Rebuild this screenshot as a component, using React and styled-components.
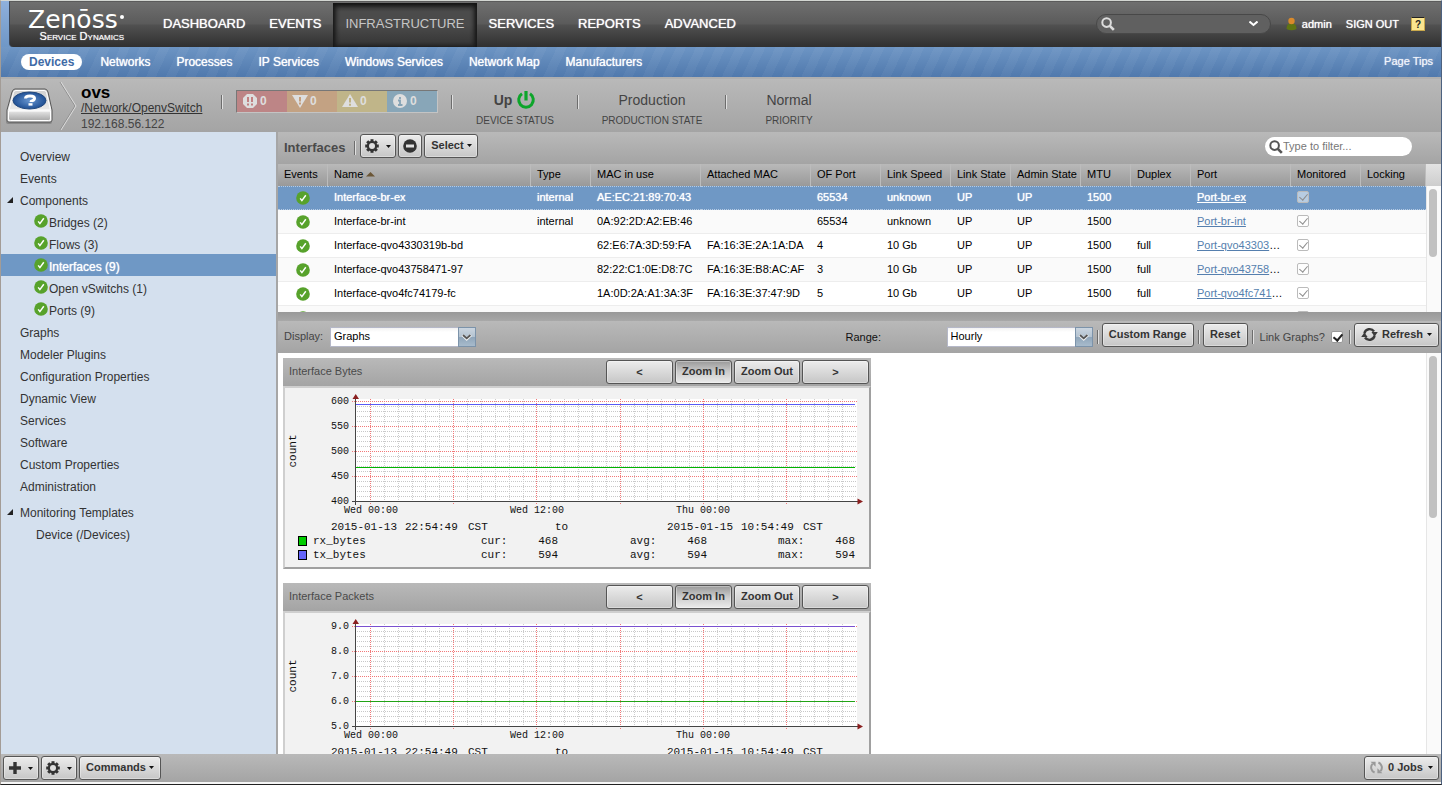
import React from "react";
import styled, { createGlobalStyle, css } from "styled-components";

const GlobalStyle = createGlobalStyle`
  * { box-sizing: border-box; }
  html, body, #root { height: 100%; }
  body {
    margin: 0;
    overflow: hidden;
    font-family: "Liberation Sans", Arial, Helvetica, sans-serif;
    font-size: 11px;
    color: #000;
  }
  button, input, select { font-family: inherit; font-size: 11px; margin: 0; }
  ul { list-style: none; margin: 0; padding: 0; }
`;

const greyBar = "linear-gradient(#b9b9b9, #a4a4a4)";

const Page = styled.div`
  display: flex;
  flex-direction: column;
  height: 100vh;
  border-top: 1px solid #d3d6d2;
  border-left: 1px solid #a39c96;
  border-right: 1px solid #4d6280;
  border-bottom: 1px solid #222;
  background: #a6a6a6;
`;

/* ---------- top navigation ---------- */

const TopFrame = styled.div`
  flex: none;
  padding-left: 8px;
  background: linear-gradient(#8fb0dc, #6f97c6);
`;

const TopBar = styled.header`
  display: flex;
  height: 46px;
  padding-left: 18px;
  border-top: 1px solid #5b5b5b;
  border-left: 1px solid #3c4656;
  border-bottom-left-radius: 4px;
  background: linear-gradient(#6f6f6f, #5b5b5b 48%, #505050 52%, #303030);
`;

const Logo = styled.a`
  display: flex;
  flex-direction: column;
  align-items: flex-end;
  width: 98px;
  margin-right: 25px;
  padding-top: 5px;
  color: #fff;
  text-decoration: none;
`;

const LogoName = styled.span`
  display: flex;
  width: 98px;
  font: 25px/25px "DejaVu Sans", sans-serif;
`;

const LogoDot = styled.span`
  width: 4px;
  height: 4px;
  margin: 8px 0 0 2px;
  border-radius: 50%;
  background: #fff;
`;

const LogoTag = styled.span`
  margin-right: 2px;
  font-size: 11px;
  line-height: 9px;
  font-variant: small-caps;
  white-space: nowrap;
  text-shadow: 0 0 1px #ccc;
`;

const MainNav = styled.nav`
  display: flex;
  flex: 1;
`;

const MainLink = styled.a`
  padding: 0 12px;
  margin-top: 1px;
  color: #fff;
  font-size: 13px;
  line-height: 42px;
  text-decoration: none;
  text-shadow: 0 0 1px #fff;
  ${(p) =>
    p.$active &&
    css`
      color: #c6c6c6;
      text-shadow: none;
      background: linear-gradient(#333, #4b4b4b 20%, #4b4b4b 50%, #333);
      box-shadow: inset 0 2px 5px #111, inset 3px 0 4px #222, inset -3px 0 4px #222;
    `}
`;

const UserArea = styled.div`
  display: flex;
  align-items: center;
  height: 44px;
  padding-right: 16px;
  a {
    color: #fff;
    text-decoration: none;
    text-shadow: 0 0 1px #fff;
  }
`;

const GlobalSearch = styled.label`
  display: flex;
  align-items: center;
  width: 175px;
  height: 20px;
  padding: 0 12px 0 4px;
  margin-right: 15px;
  border: 1px solid #484848;
  border-radius: 10px;
  background: #606060;
  input {
    flex: 1;
    min-width: 0;
    border: 0;
    outline: 0;
    background: none;
    color: #fff;
  }
`;

const UserLink = styled.a`
  display: flex;
  align-items: center;
  gap: 5px;
  margin-right: 14px;
`;

const HelpButton = styled.button`
  width: 14px;
  height: 14px;
  margin-left: 12px;
  padding: 0;
  border: 1px solid #c9a94c;
  border-top-color: #222;
  background: #fbe58f;
  color: #222;
  font-weight: bold;
  font-size: 10px;
  line-height: 11px;
`;

const SubNav = styled.nav`
  display: flex;
  flex: none;
  align-items: center;
  height: 30px;
  padding: 0 8px 0 20px;
  gap: 10px;
  background: repeating-linear-gradient(
      115deg,
      rgba(255, 255, 255, 0.04) 0 9px,
      rgba(255, 255, 255, 0) 9px 18px
    ),
    linear-gradient(#6d95c4, #5079ad);
`;

const SubLink = styled.a`
  padding: 0 8px;
  border-radius: 8px;
  color: #fff;
  font-size: 12px;
  line-height: 16px;
  text-decoration: none;
  text-shadow: 0 0 1px #fff;
  ${(p) =>
    p.$active &&
    css`
      background: #fff;
      color: #3f6ba6;
      font-weight: bold;
      text-shadow: none;
    `}
`;

const PageTips = styled.a`
  margin-left: auto;
  padding-bottom: 2px;
  color: #f0f3fa;
  text-decoration: none;
  text-shadow: 0 0 1px #e8ecf5;
`;

/* ---------- device header ---------- */

const DeviceHeader = styled.section`
  display: flex;
  flex: none;
  height: 55px;
  border-top: 2px solid #b0b0b0;
  background: ${greyBar};
  color: #444;
`;

const DeviceIcon = styled.svg`
  flex: none;
  width: 76px;
  height: 53px;
  margin-right: 4px;
`;

const DeviceText = styled.div`
  display: flex;
  flex-direction: column;
  width: 140px;
  padding-top: 5px;
  font-size: 12px;
  line-height: 18px;
  a { color: #333; line-height: 14px; }
`;

const DeviceName = styled.h1`
  margin: 0;
  color: #000;
  font-size: 17px;
  line-height: 17px;
`;

const Divider = styled.span`
  flex: none;
  width: 2px;
  height: 14px;
  border-left: 1px solid #6d6d6d;
  border-right: 1px solid #e0e0e0;
`;

const HeaderDivider = styled(Divider)`
  margin-top: 16px;
`;

const Severities = styled.ul`
  display: flex;
  height: 23px;
  margin: 11px 13px 0;
  border: 1px solid #777;
  border-right-color: #c4c4c4;
  border-bottom-color: #c4c4c4;
`;

const Severity = styled.li`
  display: flex;
  align-items: center;
  gap: 3px;
  width: 50px;
  padding: 0 0 2px 6px;
  background: ${(p) => p.$color};
  color: #dedede;
  font-size: 12px;
  font-weight: bold;
`;

const Stat = styled.div`
  width: ${(p) => p.$width}px;
  padding-top: 10px;
  text-align: center;
`;

const StatValue = styled.div`
  display: flex;
  align-items: center;
  justify-content: center;
  gap: 4px;
  height: 22px;
  font-size: 14px;
  font-weight: ${(p) => (p.$strong ? "bold" : "normal")};
`;

const StatLabel = styled.div`
  font-size: 10px;
  line-height: 20px;
`;

/* ---------- body ---------- */

const Body = styled.div`
  display: flex;
  flex: 1;
  min-height: 0;
`;

const Sidebar = styled.nav`
  flex: none;
  width: 275px;
  margin-right: 2px;
  padding-top: 12px;
  background: #d4e0ee;
`;

const TreeItem = styled.li`
  display: flex;
  align-items: center;
  gap: 1px;
  height: 22px;
  margin-top: ${(p) => (p.$spaced ? 4 : 0)}px;
  padding-left: ${(p) => p.$indent}px;
  background: ${(p) => (p.$active ? "#6f98c5" : "none")};
  a {
    padding-top: 3px;
    color: ${(p) => (p.$active ? "#fff" : "#333")};
    font-size: 12px;
    text-decoration: none;
    text-shadow: ${(p) => (p.$active ? "0 0 1px #fff" : "none")};
  }
`;

const Expander = styled.svg`
  width: 6px;
  height: 6px;
  margin: 1px 6px 0 0;
`;

const Main = styled.main`
  display: flex;
  flex: 1;
  flex-direction: column;
  min-width: 0;
`;

const Toolbar = styled.div`
  display: flex;
  flex: none;
  height: 32px;
  padding: 2px 2px 0 6px;
  background: ${greyBar};
  color: #444;
`;

const PanelTitle = styled.h2`
  margin: 0 9px 0 0;
  color: #4a4a4a;
  font-size: 13px;
  line-height: 27px;
`;

const ToolDivider = styled(Divider)`
  margin: 7px ${(p) => p.$after || 3}px 0 ${(p) => p.$before || 0}px;
`;

const Button = styled.button`
  display: flex;
  flex: none;
  align-items: center;
  justify-content: center;
  gap: ${(p) => p.$gap || 2}px;
  width: ${(p) => p.$width}px;
  height: 24px;
  padding: 0 0 ${(p) => (p.$text ? 2 : 0)}px;
  border: 1px solid #555;
  border-radius: 3px;
  box-shadow: inset 0 0 0 1px rgba(255, 255, 255, 0.35);
  background: ${(p) =>
    p.$pressed
      ? "linear-gradient(#999, #ccc 50%, #ebebeb)"
      : "linear-gradient(#ececec, #c6c6c6)"};
  color: #333;
  font-weight: bold;
  line-height: 20px;
  white-space: nowrap;
`;

const ButtonRow = styled.div`
  display: flex;
  gap: 2px;
`;

const FilterBox = styled.label`
  display: flex;
  align-items: center;
  width: 147px;
  height: 19px;
  margin: 3px 27px 0 auto;
  padding: 0 8px 0 4px;
  border-radius: 10px;
  background: #fff;
  input {
    flex: 1;
    min-width: 0;
    padding: 0 0 2px;
    border: 0;
    outline: 0;
    background: none;
  }
  input::placeholder { color: #777; }
`;

/* ---------- component grid ---------- */

const ScrollPane = styled.div`
  display: flex;
  flex: ${(p) => (p.$height ? "none" : 1)};
  height: ${(p) => (p.$height ? p.$height + "px" : "auto")};
  min-height: 0;
  overflow: hidden;
  background: #fff;
`;

const ScrollContent = styled.div`
  flex: 1;
  min-width: 0;
  overflow: hidden;
`;

const ScrollTrack = styled.div`
  flex: none;
  width: 15px;
  padding: 3px 4px 0 2px;
  border-left: 1px solid #e6e6e6;
  background: #fafafa;
`;

const ScrollHead = styled.div`
  height: 22px;
  margin: -3px -4px 3px -3px;
  background: linear-gradient(#e3e3e3, #cdcdcd);
`;

const ScrollThumb = styled.div`
  height: ${(p) => p.$height}px;
  border-radius: 4px;
  background: #c1c1c1;
`;

const Table = styled.table`
  width: 100%;
  border-collapse: separate;
  border-spacing: 0;
  table-layout: fixed;
`;

const HeadCell = styled.th`
  height: 22px;
  padding: 0 0 2px 6px;
  border-right: 1px solid #bcbcbc;
  background: linear-gradient(#b9b9b9, #999);
  font-weight: normal;
  text-align: left;
  white-space: nowrap;
  overflow: hidden;
  svg { margin: 0 0 1px 3px; }
`;

const Row = styled.tr`
  background: ${(p) => (p.$selected ? "#6f98c5" : p.$striped ? "#fafafa" : "#fff")};
  color: ${(p) => (p.$selected ? "#fff" : "#000")};
  text-shadow: ${(p) => (p.$selected ? "0 0 1px #fff" : "none")};
  td {
    border-top: ${(p) => (p.$selected ? "1px dotted #b5cbe4" : "1px solid transparent")};
    border-bottom: ${(p) => (p.$selected ? "1px dotted #b5cbe4" : "1px solid #ededed")};
  }
  a { color: ${(p) => (p.$selected ? "#fff" : "#557fae")}; }
`;

const Cell = styled.td`
  height: 24px;
  padding: 0 8px 3px 6px;
  overflow: hidden;
  text-overflow: ${(p) => (p.$clip ? "ellipsis" : "clip")};
  white-space: nowrap;
  svg, input { display: block; }
`;

const IconCell = styled(Cell)`
  padding: 0 0 0 18px;
`;

const CheckCell = styled(Cell)`
  padding-bottom: 2px;
`;

const Check = styled.input.attrs({ type: "checkbox" })`
  appearance: none;
  position: relative;
  width: 12px;
  height: 12px;
  border: 1px solid #999;
  border-radius: 2px;
  background: #fff;
  &:disabled { border-color: #bbb; background: rgba(255, 255, 255, 0.5); }
  &:checked::before {
    content: "";
    position: absolute;
    left: 3px;
    top: 0;
    width: 4px;
    height: 7px;
    border: solid ${(p) => (p.disabled ? "#8c8c8c" : "#222")};
    border-width: 0 ${(p) => (p.disabled ? "1px 1px" : "2px 2px")} 0;
    transform: rotate(40deg);
  }
`;

const Splitter = styled.div`
  flex: none;
  height: 9px;
  background: linear-gradient(#999, #a8a8a8);
`;

/* ---------- graph panel ---------- */

const FieldLabel = styled.label`
  flex: none;
  width: ${(p) => p.$width}px;
  margin-left: ${(p) => (p.$end ? "auto" : "0")};
  color: ${(p) => (p.$end ? "#111" : "#444")};
  line-height: ${(p) => (p.$end ? 29 : 27)}px;
`;

const Picker = styled.span`
  position: relative;
  flex: none;
  width: 146px;
  height: 20px;
  margin: 4px 4px 0 0;
  select {
    width: 100%;
    height: 20px;
    padding: 0 20px 2px 3px;
    border: 1px solid #b5b8c8;
    border-radius: 0;
    appearance: none;
    background: linear-gradient(#f2f2f2, #fff 4px);
    color: #000;
  }
  svg {
    position: absolute;
    top: 0;
    right: 0;
    pointer-events: none;
  }
`;

const LinkGraphs = styled.label`
  display: flex;
  align-items: center;
  gap: 6px;
  height: 27px;
  margin-right: 6px;
`;

const GraphList = styled.div`
  display: flex;
  flex-direction: column;
  gap: 14px;
  padding: 5px;
`;

const GraphCard = styled.section`
  width: 588px;
`;

const GraphHead = styled.div`
  display: flex;
  justify-content: space-between;
  height: 28px;
  padding: 2px 2px 0 6px;
  background: ${greyBar};
  h3 {
    margin: 0;
    color: #4a4a4a;
    font-size: 11px;
    font-weight: normal;
    line-height: 23px;
  }
`;

const GraphBody = styled.div`
  border: 2px solid #cfcfcf;
  border-right-color: #a0a0a0;
  border-bottom-color: #a0a0a0;
  background: #f2f2f2;
  svg {
    display: block;
    font-family: "Liberation Mono", monospace;
  }
`;

const Footer = styled.footer`
  display: flex;
  flex: none;
  justify-content: space-between;
  height: 30px;
  padding: 2px 2px 0;
  border-bottom: 2px solid #f6f6f6;
  background: ${greyBar};
`;

/* ---------- icons ---------- */

const OkIcon = () => (
  <svg width="14" height="14" viewBox="0 0 14 14" aria-label="OK">
    <circle cx="7" cy="7" r="6.8" fill="#57a22b" />
    <path d="M4.2 7.4l1.7 2.2L9.8 4.3" fill="none" stroke="#fff" strokeWidth="1.5" />
  </svg>
);

const Caret = () => (
  <svg width="5" height="3" viewBox="0 0 5 3">
    <path d="M0 0h5L2.5 3z" fill="#111" />
  </svg>
);

const GearIcon = () => (
  <svg width="14" height="14" viewBox="-7 -7 14 14">
    <g fill="#333">
      {[0, 45, 90, 135].map((a) => (
        <rect key={a} x="-1.5" y="-6.8" width="3" height="13.6" transform={`rotate(${a})`} />
      ))}
      <circle r="5.2" />
    </g>
    <circle r="3" fill="#dedede" />
  </svg>
);

const MinusIcon = () => (
  <svg width="14" height="14" viewBox="0 0 14 14">
    <circle cx="7" cy="7" r="6.8" fill="#333" />
    <path d="M3 5.5h8v3H3z" fill="#e2e2e2" />
  </svg>
);

const PlusIcon = () => (
  <svg width="12" height="12" viewBox="0 0 12 12">
    <path d="M4.3 0h3.4v4.3H12v3.4H7.7V12H4.3V7.7H0V4.3h4.3z" fill="#333" />
  </svg>
);

const SearchIcon = ({ color }) => (
  <svg width="14" height="14" viewBox="0 0 14 14" fill="none" stroke={color}>
    <circle cx="5.6" cy="5.6" r="4.3" strokeWidth="2" />
    <path d="M8.8 8.8l4 4" strokeWidth="2.6" />
  </svg>
);

const RefreshIcon = () => (
  <svg width="17" height="15" viewBox="0 0 17 15">
    <g fill="none" stroke="#3a3a3a" strokeWidth="2.4">
      <path d="M3.4 6.500A5.3 5.3 0 0 1 13 4.500" />
      <path d="M13.600 8.500A5.3 5.3 0 0 1 4 10.500" />
    </g>
    <path d="M10.400 5h6.400l-3.200 4.400zM.2 10h6.400L3.400 5.600z" fill="#3a3a3a" />
  </svg>
);

const JobsIcon = () => (
  <svg width="13" height="13" viewBox="0 0 13 13">
    <g fill="none" stroke="#999" strokeWidth="2">
      <path d="M4.600 11.500A5.500 5.500 0 0 1 2.500 2.800" />
      <path d="M8.400 1.500A5.500 5.500 0 0 1 10.500 10.200" />
    </g>
    <path d="M.600.800h5v5zM12.400 12.200h-5v-5z" fill="#999" />
  </svg>
);

const PowerIcon = () => (
  <svg width="20" height="20" viewBox="0 0 20 20" fill="none" stroke="#0da52a">
    <path d="M6 3.800a7.300 7.300 0 1 0 8 0" strokeWidth="3" />
    <path d="M10 1v9.500" strokeWidth="3.200" />
  </svg>
);

const SelectTrigger = () => (
  <svg width="18" height="20" viewBox="0 0 18 20">
    <defs>
      <linearGradient id="trigger" x1="0" y1="0" x2="0" y2="1">
        <stop offset="0" stopColor="#ccd6e0" />
        <stop offset="0.48" stopColor="#b4c3d1" />
        <stop offset="0.5" stopColor="#8fa5b9" />
        <stop offset="1" stopColor="#a9bccd" />
      </linearGradient>
    </defs>
    <rect x="0.5" y="0.5" width="17" height="19" fill="url(#trigger)" stroke="#7c93aa" />
    <path d="M4.5 8l4.2 4 4.2-4" fill="none" stroke="#f1f1f1" strokeWidth="3" />
    <path d="M5 8l3.7 3.4L12.4 8" fill="none" stroke="#555" strokeWidth="1.8" />
  </svg>
);

const DeviceDrawing = () => (
  <DeviceIcon viewBox="0 0 76 53">
    <defs>
      <linearGradient id="drive" x1="0" y1="0" x2="0" y2="1">
        <stop offset="0" stopColor="#d0d0d0" />
        <stop offset="1" stopColor="#f8f8f8" />
      </linearGradient>
      <linearGradient id="front" x1="0" y1="0" x2="0" y2="1">
        <stop offset="0" stopColor="#e6e6e6" />
        <stop offset="1" stopColor="#a8a8a8" />
      </linearGradient>
      <radialGradient id="disc">
        <stop offset="0" stopColor="#6795cf" />
        <stop offset="1" stopColor="#1f4f94" />
      </radialGradient>
    </defs>
    <rect x="5" y="40" width="46" height="5" rx="2" fill="#888" />
    <path d="M14 10h30q2 0 3 3l4 18v10q0 2-2 2H8q-2 0-2-2V31l5-18q1-3 3-3z" fill="url(#drive)" stroke="#555" />
    <path d="M15 11.500h28q2 0 2.500 2L49.500 31H8l4.500-17.500q.500-2 2.500-2z" fill="none" stroke="#fff" />
    <path d="M7.500 32h42v8q0 1.500-2 1.500h-38q-2 0-2-1.500z" fill="url(#front)" stroke="#fff" />
    <ellipse cx="28.500" cy="21.500" rx="16.500" ry="8.500" fill="url(#disc)" stroke="#23497e" />
    <path d="M24.500 19.500q0-2.500 4.500-2.500t4.500 2.300q0 1.700-2 2.400-1.500.5-1.500 1.300" fill="none" stroke="#fff" strokeWidth="3" />
    <rect x="27.500" y="24.200" width="4" height="2.400" fill="#fff" />
    <path d="M59 3l15 24-15 24" fill="none" stroke="#8f8f8f" />
    <path d="M60 3l15 24-15 24" fill="none" stroke="#dcdcdc" />
  </DeviceIcon>
);

const severityShapes = {
  critical: (
    <>
      <path d="M4 0h6l4 4v6l-4 4H4l-4-4V4z" fill="#dedede" />
      <path d="M5 3v5M9 3v5M5 9.500v2M9 9.500v2" stroke="#c18081" strokeWidth="2" />
    </>
  ),
  error: (
    <>
      <path d="M-1 1h16L7 14z" fill="#dedede" />
      <path d="M7 3v4.500M7 8.500v2" stroke="#c49e7c" strokeWidth="2" />
    </>
  ),
  warning: (
    <>
      <path d="M-1 13h16L7 0z" fill="#dedede" />
      <path d="M7 4v4.500M7 9.800v2" stroke="#bfb284" strokeWidth="2" />
    </>
  ),
  info: (
    <>
      <circle cx="7" cy="7" r="7" fill="#dedede" />
      <path d="M7 3v2M5 6.500h2V11M5 11h4.500" stroke="#86a3b5" strokeWidth="1.800" fill="none" />
    </>
  ),
};

/* ---------- data ---------- */

const mainLinks = ["DASHBOARD", "EVENTS", "INFRASTRUCTURE", "SERVICES", "REPORTS", "ADVANCED"];
const subLinks = [
  "Devices", "Networks", "Processes", "IP Services", "Windows Services", "Network Map", "Manufacturers",
];

const severities = [
  ["critical", "#bd8586"],
  ["error", "#c3a283"],
  ["warning", "#c0b589"],
  ["info", "#88a6b8"],
];

const tree = [
  { label: "Overview" },
  { label: "Events" },
  { label: "Components", open: true },
  { label: "Bridges (2)", ok: true },
  { label: "Flows (3)", ok: true },
  { label: "Interfaces (9)", ok: true, active: true },
  { label: "Open vSwitchs (1)", ok: true },
  { label: "Ports (9)", ok: true },
  { label: "Graphs" },
  { label: "Modeler Plugins" },
  { label: "Configuration Properties" },
  { label: "Dynamic View" },
  { label: "Services" },
  { label: "Software" },
  { label: "Custom Properties" },
  { label: "Administration" },
  { label: "Monitoring Templates", open: true, spaced: true },
  { label: "Device (/Devices)", indent: 35 },
];

const columns = [
  ["Events", 50], ["Name"], ["Type", 60], ["MAC in use", 110], ["Attached MAC", 110],
  ["OF Port", 70], ["Link Speed", 70], ["Link State", 60], ["Admin State", 70], ["MTU", 50],
  ["Duplex", 60], ["Port", 100], ["Monitored", 70], ["Locking", 65],
];

const rows = [
  ["Interface-br-ex", "internal", "AE:EC:21:89:70:43", "", "65534", "unknown", "UP", "UP", "1500", "", "Port-br-ex"],
  ["Interface-br-int", "internal", "0A:92:2D:A2:EB:46", "", "65534", "unknown", "UP", "UP", "1500", "", "Port-br-int"],
  ["Interface-qvo4330319b-bd", "", "62:E6:7A:3D:59:FA", "FA:16:3E:2A:1A:DA", "4", "10 Gb", "UP", "UP", "1500", "full", "Port-qvo4330319b-bd"],
  ["Interface-qvo43758471-97", "", "82:22:C1:0E:D8:7C", "FA:16:3E:B8:AC:AF", "3", "10 Gb", "UP", "UP", "1500", "full", "Port-qvo43758471-97"],
  ["Interface-qvo4fc74179-fc", "", "1A:0D:2A:A1:3A:3F", "FA:16:3E:37:47:9D", "5", "10 Gb", "UP", "UP", "1500", "full", "Port-qvo4fc74179-fc"],
  ["", "", "", "", "", "", "", "", "", "", ""],
];

const graphs = [
  {
    title: "Interface Bytes",
    ticks: ["600", "550", "500", "450", "400"],
    lines: [["#00b300", 79], ["#5a5af5", 16]],
    legend: [["rx_bytes", "#00cc00", "468"], ["tx_bytes", "#6464fa", "594"]],
  },
  {
    title: "Interface Packets",
    ticks: ["9.0", "8.0", "7.0", "6.0", "5.0"],
    lines: [["#22a316", 88], ["#7a50d0", 13]],
    legend: [["rx_packets", "#00cc00", "6"], ["tx_packets", "#6464fa", "9"]],
  },
];

/* ---------- graph drawing ---------- */

const plot = { left: 70, right: 572, top: 11, bottom: 113 };

function Plot({ graph }) {
  const minorY = Array.from({ length: 20 }, (_, i) => 13 + i * 5).filter((_, i) => i % 5);
  const verticals = Array.from({ length: 35 }, (_, i) => ({
    x: Math.round(85 + i * 13.87),
    major: i % 6 === 0,
  }));
  return (
    <svg width="584" height="179" viewBox="0 0 584 179">
      <rect
        x={plot.left}
        y={plot.top}
        width={plot.right - plot.left}
        height={plot.bottom - plot.top}
        fill="#fff"
      />
      <g strokeDasharray="1 1" shapeRendering="crispEdges" strokeWidth="1">
        {minorY.map((y) => (
          <path key={y} d={`M${plot.left} ${y + 0.5}H${plot.right}`} stroke="#c8c8c8" />
        ))}
        {verticals.map(({ x, major }) => (
          <path
            key={x}
            d={`M${x + 0.5} ${plot.top}V${major ? 116 : 114}`}
            stroke={major ? "#f27878" : "#cdcdcd"}
          />
        ))}
        {[13, 38, 63, 88].map((y) => (
          <path key={y} d={`M67 ${y + 0.5}H${plot.right + 1}`} stroke="#f27878" />
        ))}
      </g>
      {graph.lines.map(([color, y]) => (
        <path key={color} d={`M71 ${y + 0.5}H570`} stroke={color} />
      ))}
      <path d="M70.5 8V117M67 113.5H575" stroke="#444" fill="none" />
      <path d="M67.500 11h6.500l-3.300-5zM572.500 110.500v6l5.500-3z" fill="#8a1f1f" />
      <g fontSize="10" fill="#111">
        {graph.ticks.map((t, i) => (
          <text key={t} x="64" y={16 + i * 25} textAnchor="end">{t}</text>
        ))}
        <text x="86" y="125" textAnchor="middle">Wed 00:00</text>
        <text x="252" y="125" textAnchor="middle">Wed 12:00</text>
        <text x="418" y="125" textAnchor="middle">Thu 00:00</text>
      </g>
      <g fontSize="11" fill="#111">
        <text transform="translate(11 63) rotate(-90)" textAnchor="middle">count</text>
        <text x="46" y="142">2015-01-13</text>
        <text x="120" y="142">22:54:49</text>
        <text x="183" y="142">CST</text>
        <text x="270" y="142">to</text>
        <text x="382" y="142">2015-01-15</text>
        <text x="456" y="142">10:54:49</text>
        <text x="518" y="142">CST</text>
        {graph.legend.map(([name, color, value], i) => {
          const y = 156 + i * 14;
          return (
            <g key={name}>
              <rect x="13.5" y={y - 7.5} width="8" height="9" fill={color} stroke="#000" />
              <text x="28" y={y}>{name}</text>
              <text x="196" y={y}>cur:</text>
              <text x="273" y={y} textAnchor="end">{value}</text>
              <text x="345" y={y}>avg:</text>
              <text x="422" y={y} textAnchor="end">{value}</text>
              <text x="493" y={y}>max:</text>
              <text x="570" y={y} textAnchor="end">{value}</text>
            </g>
          );
        })}
      </g>
    </svg>
  );
}

function Graph({ graph }) {
  return (
    <GraphCard>
      <GraphHead>
        <h3>{graph.title}</h3>
        <ButtonRow>
          <Button $width={67}>&lt;</Button>
          <Button $width={57} $text $pressed>Zoom In</Button>
          <Button $width={66} $text>Zoom Out</Button>
          <Button $width={67}>&gt;</Button>
        </ButtonRow>
      </GraphHead>
      <GraphBody>
        <Plot graph={graph} />
      </GraphBody>
    </GraphCard>
  );
}

function ComponentTable() {
  return (
    <Table>
      <colgroup>
        {columns.map(([name, width]) => (
          <col key={name} width={width} />
        ))}
      </colgroup>
      <thead>
        <tr>
          {columns.map(([name]) => (
            <HeadCell key={name} scope="col">
              {name}
              {name === "Name" && (
                <svg width="9" height="5" viewBox="0 0 9 5">
                  <path d="M0 4.5L4.5 0 9 4.5z" fill="#6b5636" />
                </svg>
              )}
            </HeadCell>
          ))}
        </tr>
      </thead>
      <tbody>
        {rows.map((row, i) => (
          <Row key={i} $selected={i === 0} $striped={i % 2 === 1}>
            <IconCell><OkIcon /></IconCell>
            {row.slice(0, 10).map((value, j) => (
              <Cell key={j}>{value}</Cell>
            ))}
            <Cell $clip>{row[10] && <a href="#port">{row[10]}</a>}</Cell>
            <CheckCell><Check defaultChecked disabled aria-label="Monitored" /></CheckCell>
            <Cell />
          </Row>
        ))}
      </tbody>
    </Table>
  );
}

export default function App() {
  return (
    <Page>
      <GlobalStyle />
      <TopFrame>
        <TopBar>
          <Logo href="#home">
            <LogoName>Zenōss<LogoDot /></LogoName>
            <LogoTag>Service Dynamics</LogoTag>
          </Logo>
          <MainNav>
            {mainLinks.map((name) => (
              <MainLink key={name} href="#nav" $active={name === "INFRASTRUCTURE"}>{name}</MainLink>
            ))}
          </MainNav>
          <UserArea>
            <GlobalSearch>
              <SearchIcon color="#ddd" />
              <input type="text" aria-label="Search" />
              <svg width="9" height="6" viewBox="0 0 9 6">
                <path d="M.5.5l4 3.500 4-3.500" fill="none" stroke="#fff" strokeWidth="2" />
              </svg>
            </GlobalSearch>
            <UserLink href="#user">
              <svg width="11" height="14" viewBox="0 0 11 14">
                <path d="M.5 12q0-6 5-6t5 6q-5 2.500-10 0z" fill="#5f7413" />
                <circle cx="5.5" cy="4" r="3.2" fill="#d98a2b" />
              </svg>
              admin
            </UserLink>
            <a href="#signout">SIGN OUT</a>
            <HelpButton>?</HelpButton>
          </UserArea>
        </TopBar>
      </TopFrame>
      <SubNav>
        {subLinks.map((name) => (
          <SubLink key={name} href="#sub" $active={name === "Devices"}>{name}</SubLink>
        ))}
        <PageTips href="#tips">Page Tips</PageTips>
      </SubNav>
      <DeviceHeader>
        <DeviceDrawing />
        <DeviceText>
          <DeviceName>ovs</DeviceName>
          <a href="#class">/Network/OpenvSwitch</a>
          <span>192.168.56.122</span>
        </DeviceText>
        <HeaderDivider />
        <Severities>
          {severities.map(([name, color]) => (
            <Severity key={name} $color={color}>
              <svg width="14" height="14" viewBox="0 0 14 14" overflow="visible">{severityShapes[name]}</svg>
              0
            </Severity>
          ))}
        </Severities>
        <HeaderDivider />
        <Stat $width={124}>
          <StatValue $strong>Up<PowerIcon /></StatValue>
          <StatLabel>DEVICE STATUS</StatLabel>
        </Stat>
        <HeaderDivider />
        <Stat $width={146}>
          <StatValue>Production</StatValue>
          <StatLabel>PRODUCTION STATE</StatLabel>
        </Stat>
        <HeaderDivider />
        <Stat $width={124}>
          <StatValue>Normal</StatValue>
          <StatLabel>PRIORITY</StatLabel>
        </Stat>
      </DeviceHeader>

      <Body>
        <Sidebar>
          <ul>
            {tree.map((item) => (
              <TreeItem
                key={item.label}
                $active={item.active}
                $spaced={item.spaced}
                $indent={item.open ? 6 : item.ok ? 33 : item.indent || 19}
              >
                {item.open && (
                  <Expander viewBox="0 0 6 6"><path d="M0 6L6 0v6z" fill="#222" /></Expander>
                )}
                {item.ok && <OkIcon />}
                <a href="#item">{item.label}</a>
              </TreeItem>
            ))}
          </ul>
        </Sidebar>

        <Main>
          <Toolbar>
            <PanelTitle>Interfaces</PanelTitle>
            <ToolDivider $after={4} />
            <ButtonRow>
              <Button $width={36} $gap={7} aria-label="Configure"><GearIcon /><Caret /></Button>
              <Button $width={24} aria-label="Delete"><MinusIcon /></Button>
              <Button $width={54} $text $gap={3}>Select<Caret /></Button>
            </ButtonRow>
            <FilterBox>
              <SearchIcon color="#555" />
              <input type="text" placeholder="Type to filter..." aria-label="Filter" />
            </FilterBox>
          </Toolbar>
          <ScrollPane $height={148}>
            <ScrollContent><ComponentTable /></ScrollContent>
            <ScrollTrack>
              <ScrollHead />
              <ScrollThumb $height={68} />
            </ScrollTrack>
          </ScrollPane>
          <Splitter />
          <Toolbar>
            <FieldLabel htmlFor="display" $width={46}>Display:</FieldLabel>
            <Picker>
              <select id="display"><option>Graphs</option></select>
              <SelectTrigger />
            </Picker>
            <FieldLabel htmlFor="range" $width={101} $end>Range:</FieldLabel>
            <Picker>
              <select id="range"><option>Hourly</option></select>
              <SelectTrigger />
            </Picker>
            <ToolDivider />
            <Button $width={92} $text>Custom Range</Button>
            <ToolDivider $before={4} />
            <Button $width={45} $text>Reset</Button>
            <ToolDivider $before={4} $after={6} />
            <LinkGraphs>Link Graphs?<Check defaultChecked /></LinkGraphs>
            <ToolDivider />
            <Button $width={85} $text $gap={4}><RefreshIcon />Refresh<Caret /></Button>
          </Toolbar>
          <ScrollPane>
            <ScrollContent>
              <GraphList>
                {graphs.map((graph) => (
                  <Graph key={graph.title} graph={graph} />
                ))}
              </GraphList>
            </ScrollContent>
            <ScrollTrack><ScrollThumb $height={162} /></ScrollTrack>
          </ScrollPane>
        </Main>
      </Body>

      <Footer>
        <ButtonRow>
          <Button $width={36} $gap={7} aria-label="Add"><PlusIcon /><Caret /></Button>
          <Button $width={36} $gap={7} aria-label="Configure"><GearIcon /><Caret /></Button>
          <Button $width={82} $text $gap={3}>Commands<Caret /></Button>
        </ButtonRow>
        <Button $width={75} $text $gap={5}><JobsIcon />0 Jobs<Caret /></Button>
      </Footer>
    </Page>
  );
}
